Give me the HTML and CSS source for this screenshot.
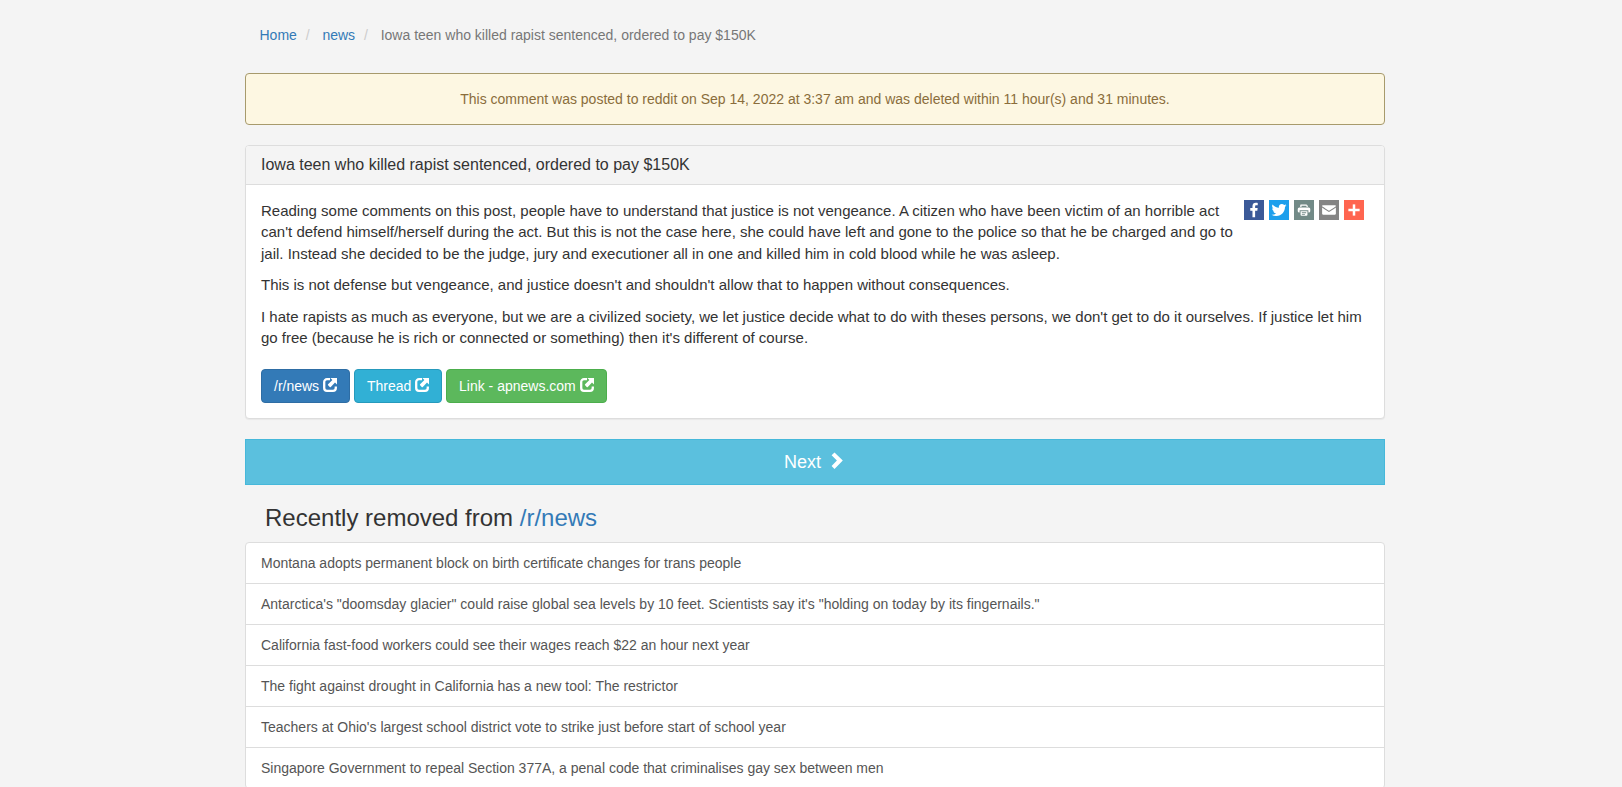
FILE: index.html
```html
<!DOCTYPE html>
<html lang="en">
<head>
<meta charset="utf-8">
<title>Iowa teen who killed rapist sentenced, ordered to pay $150K</title>
<link rel="stylesheet" href="styles.css">
</head>
<body>
<svg class="defs" aria-hidden="true">
  <symbol id="new-window" viewBox="0 0 14 14"><path d="M7 1.200H4A2.800 2.800 0 0 0 1.200 4v6A2.800 2.800 0 0 0 4 12.800h6a2.800 2.800 0 0 0 2.800-2.800V8.600" fill="none" stroke="currentColor" stroke-width="2.300"/><path d="M7.400 0H14v6.600l-2-2-4.200 4.300a.8.8 0 0 1-1.100 0L5.100 7.300a.8.8 0 0 1 0-1.100L9.400 2z" fill="currentColor"/></symbol>
</svg>
<div class="container">
  <ol class="breadcrumb">
    <li><a href="#">Home</a></li>
    <li> <a href="#">news</a></li>
    <li class="active"> Iowa teen who killed rapist sentenced, ordered to pay $150K</li>
  </ol>
  <div class="alert">This comment was posted to reddit on Sep 14, 2022 at 3:37 am and was deleted within 11 hour(s) and 31 minutes.</div>
  <div class="panel">
    <div class="panel-heading"><h1>Iowa teen who killed rapist sentenced, ordered to pay $150K</h1></div>
    <div class="panel-body">
      <div class="share">
        <svg class="facebook" viewBox="0 0 32 32"><path d="M17.78 27.5V17.008h3.522l.527-4.09h-4.05v-2.61c0-1.182.33-1.99 2.023-1.99h2.166V4.66c-.375-.05-1.66-.16-3.155-.16-3.123 0-5.26 1.905-5.26 5.405v3.016h-3.53v4.09h3.53V27.5h4.223z"/></svg>
        <svg class="twitter" viewBox="0 0 32 32"><path d="M28 8.557a9.913 9.913 0 0 1-2.828.775 4.93 4.93 0 0 0 2.166-2.725 9.738 9.738 0 0 1-3.13 1.194 4.92 4.92 0 0 0-3.593-1.55 4.924 4.924 0 0 0-4.794 6.049c-4.09-.21-7.72-2.17-10.15-5.15a4.942 4.942 0 0 0-.665 2.477c0 1.71.87 3.214 2.19 4.1a4.968 4.968 0 0 1-2.23-.616v.06c0 2.39 1.7 4.38 3.952 4.83-.414.115-.85.174-1.297.174-.318 0-.626-.03-.928-.086a4.935 4.935 0 0 0 4.6 3.42 9.893 9.893 0 0 1-6.114 2.107c-.398 0-.79-.023-1.175-.068a13.953 13.953 0 0 0 7.55 2.213c9.056 0 14.01-7.507 14.01-14.013 0-.213-.005-.426-.015-.637.96-.695 1.795-1.56 2.455-2.55z"/></svg>
        <svg class="print" viewBox="0 0 32 32"><path fill-rule="evenodd" d="M11 7h9l2 2v2h-2V9h-8v2h-2V8q0-1 1-1zM8.500 12h15q2.500 0 2.500 2.500V18q0 2-2.500 2H23v-3.500H9V20h-.5Q6 20 6 18v-3.500Q6 12 8.500 12zM10.500 18h11v5.500q0 1.500-1.500 1.500h-8q-1.500 0-1.500-1.500zM12.500 19.500V21h7v-1.500zM12.500 22.500v1h5v-1z"/></svg>
        <svg class="email" viewBox="0 0 32 32"><path d="M27 21.775v-9.9s-10.01 6.985-10.982 7.348C15.058 18.878 5 11.875 5 11.875v9.9c0 1.375.293 1.65 1.65 1.65h18.7c1.393 0 1.65-.242 1.65-1.65zm-.017-11.841c0-1.001-.291-1.359-1.633-1.359H6.65C5.270 8.575 5 9.004 5 10.005l.017.154s9.938 6.842 11 7.216c1.122-.435 10.983-7.370 10.983-7.370z"/></svg>
        <svg class="more" viewBox="0 0 32 32"><path d="M14 7h4v18h-4z"/><path d="M7 14h18v4H7z"/></svg>
      </div>
      <p>Reading some comments on this post, people have to understand that justice is not vengeance. A citizen who have been victim of an horrible act can't defend himself/herself during the act. But this is not the case here, she could have left and gone to the police so that he be charged and go to jail. Instead she decided to be the judge, jury and executioner all in one and killed him in cold blood while he was asleep.</p>
      <p>This is not defense but vengeance, and justice doesn't and shouldn't allow that to happen without consequences.</p>
      <p>I hate rapists as much as everyone, but we are a civilized society, we let justice decide what to do with theses persons, we don't get to do it ourselves. If justice let him go free (because he is rich or connected or something) then it's different of course.</p>
      <div class="actions">
        <a class="btn primary" href="#">/r/news <svg><use href="#new-window"/></svg></a>
        <a class="btn info" href="#">Thread <svg><use href="#new-window"/></svg></a>
        <a class="btn success" href="#">Link - apnews.com <svg><use href="#new-window"/></svg></a>
      </div>
    </div>
  </div>
  <a class="next" href="#">Next <svg viewBox="0 0 18 18"><path d="M3.600 3.200 6.500.4l8.300 8.200-8.300 8.300-2.900-2.900 5.300-5.400z" fill="currentColor"/></svg></a>
  <h2>Recently removed from <a href="#">/r/news</a></h2>
  <div class="list">
    <a href="#">Montana adopts permanent block on birth certificate changes for trans people</a>
    <a href="#">Antarctica's "doomsday glacier" could raise global sea levels by 10 feet. Scientists say it's "holding on today by its fingernails."</a>
    <a href="#">California fast-food workers could see their wages reach $22 an hour next year</a>
    <a href="#">The fight against drought in California has a new tool: The restrictor</a>
    <a href="#">Teachers at Ohio's largest school district vote to strike just before start of school year</a>
    <a href="#">Singapore Government to repeal Section 377A, a penal code that criminalises gay sex between men</a>
  </div>
</div>
</body>
</html>
```
FILE: styles.css
```css
* { box-sizing: border-box; }
html { overflow: hidden; }
body {
  margin: 0;
  height: 787px;
  overflow: hidden;
  background: #f4f4f4;
  color: #333;
  font: 14px/20px "Liberation Sans", Arial, sans-serif;
}
a { color: #337ab7; text-decoration: none; }
.defs { display: none; }
.container { width: 1140px; margin-left: 245px; padding-top: 17px; }

.breadcrumb { margin: 0 0 20px; padding: 8px 15px 8px 14.5px; list-style: none; }
.breadcrumb li { display: inline-block; }
.breadcrumb li + li::before { content: "/\00a0 "; padding: 0 5px; color: #ccc; }
.breadcrumb .active { color: #777; }

.alert {
  margin-bottom: 20px;
  padding: 15px;
  border: 1px solid #a79a6c;
  border-radius: 4px;
  background: #fdf7e2;
  color: #8a6d3b;
  text-align: center;
}

.panel {
  margin-bottom: 20px;
  border: 1px solid #ddd;
  border-radius: 4px;
  background: #fff;
  box-shadow: 0 1px 1px rgba(0, 0, 0, .05);
}
.panel-heading {
  padding: 10px 15px;
  border-bottom: 1px solid #ddd;
  border-radius: 3px 3px 0 0;
  background: #f4f4f4;
}
.panel-heading h1 { margin: 0; font-size: 16px; font-weight: 400; line-height: 18px; }
.panel-body { padding: 15px; }
.panel-body p { margin: 0 0 10px; font-size: 15px; line-height: 21.43px; }

.share { float: right; display: flex; gap: 5px; padding: 0 5px 8px 10px; }
.share svg { width: 20px; height: 20px; fill: #fff; }
.facebook { background: #3b5998; }
.twitter { background: #1d9fec; }
.print { background: #728a87; }
.email { background: #848484; }
.more { background: #ff6550; }

.actions { padding-top: 10px; }
.btn {
  display: inline-block;
  padding: 6px 12px;
  border: 1px solid;
  border-radius: 4px;
  color: #fff;
  vertical-align: middle;
}
.btn svg { width: 14px; height: 14px; vertical-align: -1px; }
.primary { background: #337ab7; border-color: #2e6da4; }
.info { background: #31b0d5; border-color: #269abc; }
.success { background: #5cb85c; border-color: #4cae4c; }

.next {
  display: block;
  padding: 10px 16px;
  border: 1px solid #46b8da;
  background: #5bc0de;
  color: #fff;
  font-size: 18px;
  line-height: 24.6px;
  text-align: center;
}
.next svg { width: 18px; height: 18px; margin-left: 2px; vertical-align: -2px; }

h2 { margin: 20px 0 10px; padding-left: 20px; font-size: 24px; font-weight: 400; line-height: 26.4px; }
.list { border: 1px solid #ddd; border-radius: 4px; background: #fff; }
.list a { display: block; padding: 10px 15px; color: #555; }
.list a + a { border-top: 1px solid #ddd; }
```
